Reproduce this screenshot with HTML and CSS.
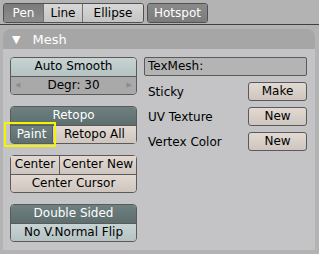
FILE: index.html
```html
<!DOCTYPE html>
<html lang="en">

<head>
    <meta charset="UTF-8">
    <title>Mesh</title>
    <link rel="stylesheet" href="styles.css">
</head>

<body>
    <div class="toolbar">
        <div class="tabs">
            <div class="tab active pen">Pen</div>
            <div class="tab line">Line</div>
            <div class="tab ellipse">Ellipse</div>
        </div>
        <div class="tabs">
            <div class="tab hotspot">Hotspot</div>
        </div>
    </div>

    <div class="panel">
        <div class="panel-header">
            <span class="arrow">&#9660;</span>
            <span>Mesh</span>
        </div>
        <div class="panel-body">
            <div class="col-left">
                <div class="group">
                    <div class="btn teal-light">Auto Smooth</div>
                    <div class="btn num"><span class="tri">&#9664;</span>Degr: 30<span class="tri">&#9654;</span></div>
                </div>

                <div class="group">
                    <div class="btn teal-dark">Retopo</div>
                    <div class="row">
                        <div class="btn teal-dark paint">Paint</div>
                        <div class="btn beige grow">Retopo All</div>
                    </div>
                    <div class="highlight"></div>
                </div>

                <div class="group">
                    <div class="row">
                        <div class="btn beige center">Center</div>
                        <div class="btn beige grow">Center New</div>
                    </div>
                    <div class="btn beige">Center Cursor</div>
                </div>

                <div class="group">
                    <div class="btn teal-dark">Double Sided</div>
                    <div class="btn teal-light">No V.Normal Flip</div>
                </div>
            </div>

            <div class="col-right">
                <div class="field">TexMesh:</div>
                <div class="prop">
                    <span>Sticky</span>
                    <div class="btn beige small">Make</div>
                </div>
                <div class="prop">
                    <span>UV Texture</span>
                    <div class="btn beige small">New</div>
                </div>
                <div class="prop">
                    <span>Vertex Color</span>
                    <div class="btn beige small">New</div>
                </div>
            </div>
        </div>
    </div>
</body>

</html>
```

FILE: styles.css
```css
* {
    margin: 0;
    padding: 0;
    box-sizing: border-box;
}

html,
body {
    background-color: #b3b3b3;
    color: black;
    font-family: "DejaVu Sans", sans-serif;
    font-size: 11px;
    height: 100%;
}

.toolbar {
    display: flex;
    gap: 3px;
    padding: 3px 3px 0 3px;
    height: 25px;
    border-bottom: 1px solid #404040;
}

.tabs {
    display: flex;
    height: 20px;
    border: 1px solid #505050;
    border-radius: 3px;
    overflow: hidden;
}

.tab {
    flex: none;
    line-height: 18px;
    font-size: 12px;
    text-align: center;
    background: linear-gradient(#d8d8d8, #c4c4c4);
    border-left: 1px solid #707070;
}

.tab:first-child {
    border-left: none;
}

.pen {
    width: 39px;
}

.line {
    width: 39px;
}

.ellipse {
    width: 61px;
}

.hotspot {
    width: 59px;
}

.tab.active {
    background: linear-gradient(#7a7a7a, #8e8e8e);
    color: white;
}

.tab.hotspot {
    background: linear-gradient(#8a8a8a, #7c7c7c);
    color: white;
}

.panel {
    margin: 4px 4px 0 3px;
    border-radius: 7px 7px 0 0;
    overflow: hidden;
    background-color: #c4c4c6;
    height: 221px;
}

.panel-header {
    background-color: #a6a6a6;
    height: 20px;
    display: flex;
    align-items: center;
    gap: 12px;
    padding-left: 9px;
    color: white;
    font-size: 13px;
}

.arrow {
    font-size: 11px;
}

.panel-body {
    display: flex;
    gap: 7px;
    padding: 8px 8px 0 7px;
}

.col-left {
    width: 127px;
    display: flex;
    flex-direction: column;
    gap: 11px;
}

.group {
    position: relative;
    border: 1px solid #5a5a5a;
    border-radius: 4px;
}

.row {
    display: flex;
}

.btn {
    height: 18px;
    line-height: 17px;
    text-align: center;
    font-size: 12px;
    border-top: 1px solid #5a5a5a;
    white-space: nowrap;
}

.group > .btn:first-child,
.group > .row:first-child .btn {
    border-top: none;
}

.group > .btn:first-child {
    border-radius: 3px 3px 0 0;
}

.group > .btn:last-child,
.group > .row:last-child .btn {
    border-radius: 0 0 3px 3px;
}

.row .btn + .btn {
    border-left: 1px solid #5a5a5a;
}

.grow {
    flex: 1;
}

.teal-light {
    background: linear-gradient(#c8d4d4, #b4c2c2);
}

.teal-dark {
    background: linear-gradient(#6e8080, #5e6e6e);
    color: white;
}

.beige {
    background: linear-gradient(#e2dad2, #cec6be);
}

.num {
    background-color: #a9a9a9;
    display: flex;
    justify-content: space-between;
    padding: 0 4px;
}

.tri {
    color: #8c8c8c;
    font-size: 7px;
}

.paint {
    width: 41px;
}

.center {
    width: 48px;
}

.highlight {
    position: absolute;
    left: -7px;
    top: 15px;
    width: 52px;
    height: 25px;
    border: 2px solid #f4f400;
}

.col-right {
    flex: 1;
    display: flex;
    flex-direction: column;
    gap: 6px;
}

.field {
    height: 19px;
    line-height: 17px;
    border: 1px solid #5a5a5a;
    border-radius: 2px;
    background-color: #b4b4b4;
    padding-left: 3px;
    font-size: 12px;
}

.prop {
    display: flex;
    justify-content: space-between;
    align-items: center;
    padding-left: 4px;
    font-size: 12px;
}

.btn.small {
    width: 59px;
    height: 19px;
    line-height: 17px;
    border: 1px solid #5a5a5a;
    border-radius: 3px;
}
```
